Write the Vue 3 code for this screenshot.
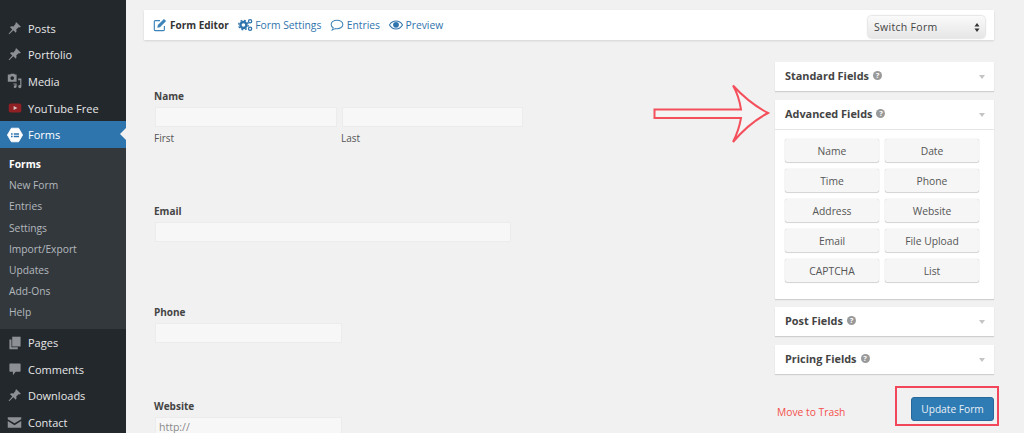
<script setup>
const pin = 'M12.5 1.5l6 6-1.6 1-1-.6-3.6 3.4c.7 1.6.4 3.2-.6 4.3l-3.2-3.2-5.5 5.1-.9-.4 4.9-5.9-3.1-3.1c1.2-1 2.8-1.2 4.3-.6l3.4-3.7-.5-1z'
const topItems = [
  { label: 'Posts', icon: 'pin' },
  { label: 'Portfolio', icon: 'pin' },
  { label: 'Media', icon: 'media' },
  { label: 'YouTube Free', icon: 'yt' }
]
const subItems = ['New Form', 'Entries', 'Settings', 'Import/Export', 'Updates', 'Add-Ons', 'Help']
const bottomItems = [
  { label: 'Pages', icon: 'pages' },
  { label: 'Comments', icon: 'comment' },
  { label: 'Downloads', icon: 'pin' },
  { label: 'Contact', icon: 'mail' }
]
const advanced = ['Name', 'Date', 'Time', 'Phone', 'Address', 'Website', 'Email', 'File Upload', 'CAPTCHA', 'List']
</script>

<template>
  <div class="page">
    <aside class="side">
      <ul class="menu">
        <li v-for="m in topItems" :key="m.label" class="item">
          <span class="ic">
            <svg v-if="m.icon === 'pin'" viewBox="0 0 20 20" width="15" height="15"><path :d="pin" fill="#8d9094"/></svg>
            <svg v-else-if="m.icon === 'media'" viewBox="0 0 20 20" width="16" height="16"><path d="M1 2h3l1-1h4l1 1h2v9H1zM6.5 4a2.3 2.3 0 100 4.600a2.300 2.300 0 000-4.600z" fill="#8d9094" fill-rule="evenodd"/><path d="M14 7h4v10a2 2 0 11-1.500-1.900V9h-2.500zM8 13h4v4a1.800 1.800 0 11-1.400-1.700V14.500H8z" fill="#8d9094"/></svg>
            <svg v-else viewBox="0 0 20 20" width="14" height="14"><rect x="1" y="3.500" width="18" height="13" rx="2.500" fill="#8f2024"/><path d="M8 7.200l5.500 2.800L8 12.800z" fill="#d8c4c4"/></svg>
          </span>{{ m.label }}
        </li>
        <li class="item current">
          <span class="ic">
            <svg viewBox="0 0 20 20" width="16" height="16"><path d="M5.500 1.500h9l5 8.500-5 8.500h-9L.5 10z" fill="#fff" stroke="#fff" stroke-linejoin="round"/><path d="M5 7.800h2v1.800H5zM8.500 7.800H15v1.800H8.500zM5 11h2v1.800H5zM8.500 11H15v1.800H8.500z" fill="#2e75ae"/></svg>
          </span>Forms
          <span class="notch"></span>
        </li>
        <li class="sub">
          <div class="sub-link strong">Forms</div>
          <div v-for="s in subItems" :key="s" class="sub-link">{{ s }}</div>
        </li>
        <li v-for="m in bottomItems" :key="m.label" class="item">
          <span class="ic">
            <svg v-if="m.icon === 'pin'" viewBox="0 0 20 20" width="15" height="15"><path :d="pin" fill="#8d9094"/></svg>
            <svg v-else-if="m.icon === 'pages'" viewBox="0 0 20 20" width="14" height="14"><path d="M6 1h12v14H6z" fill="#8d9094"/><path d="M2 5h3v11h9v3H2z" fill="#8d9094"/></svg>
            <svg v-else-if="m.icon === 'comment'" viewBox="0 0 20 20" width="14" height="14"><path d="M3 2h14a1 1 0 011 1v10a1 1 0 01-1 1h-6l-4 5v-5H3a1 1 0 01-1-1V3a1 1 0 011-1z" fill="#8d9094"/></svg>
            <svg v-else viewBox="0 0 20 20" width="15" height="15"><path d="M1 3h18v2.500l-9 5.500-9-5.500zM1 8l9 5.500L19 8v9H1z" fill="#8d9094"/></svg>
          </span>{{ m.label }}
        </li>
      </ul>
    </aside>

    <main class="main">
      <nav class="toolbar">
        <span class="tab active">
          <svg viewBox="0 0 16 16" width="14" height="14"><path d="M13 9v4.500a1 1 0 01-1 1H2.500a1 1 0 01-1-1V4a1 1 0 011-1H8" fill="none" stroke="#3f84b9" stroke-width="1.300"/><path d="M5.500 8l7-7 2.500 2.500-7 7L5 11z" fill="#3f84b9"/></svg>
          Form Editor
        </span>
        <span class="tab">
          <svg viewBox="0 0 18 16" width="15" height="14"><circle cx="6.500" cy="8" r="3.600" fill="none" stroke="#2f74ad" stroke-width="2.800"/><circle cx="6.500" cy="8" r="5.700" fill="none" stroke="#2f74ad" stroke-width="1.600" stroke-dasharray="2.200 2.300"/><circle cx="14.500" cy="3.500" r="1.900" fill="none" stroke="#2f74ad" stroke-width="1.600"/><circle cx="14.500" cy="12.500" r="1.900" fill="none" stroke="#2f74ad" stroke-width="1.600"/></svg>
          Form Settings
        </span>
        <span class="tab">
          <svg viewBox="0 0 16 16" width="14" height="14"><path d="M8 2.500c3.700 0 6.700 2.200 6.700 4.900S11.700 12.300 8 12.300c-.8 0-1.500-.1-2.100-.3-.9.9-2 1.500-3.400 1.700.7-.8 1.100-1.600 1.200-2.500C2.200 10.300 1.300 9 1.300 7.400c0-2.700 3-4.900 6.700-4.900z" fill="none" stroke="#3f84b9" stroke-width="1.200"/></svg>
          Entries
        </span>
        <span class="tab">
          <svg viewBox="0 0 16 16" width="14" height="14"><path d="M.5 8C2.300 5 5 3.500 8 3.500S13.700 5 15.500 8c-1.800 3-4.500 4.500-7.500 4.500S2.300 11 .5 8z" fill="none" stroke="#2f74ad" stroke-width="1.200"/><circle cx="8" cy="7.800" r="3.300" fill="#2f74ad"/></svg>
          Preview
        </span>
        <span class="switch">Switch Form
          <svg viewBox="0 0 6 11" width="6" height="11"><path d="M3 1l2.500 3.500h-5zM3 10L.5 6.500h5z" fill="#333"/></svg>
        </span>
      </nav>

      <div class="body">
        <form class="form" @submit.prevent>
          <section class="field f-name">
            <label class="lbl">Name</label>
            <div class="pair">
              <div><div class="inp w-first"></div><div class="cap">First</div></div>
              <div><div class="inp w-last"></div><div class="cap">Last</div></div>
            </div>
          </section>
          <section class="field f-email">
            <label class="lbl">Email</label>
            <div class="inp w-email"></div>
          </section>
          <section class="field f-phone">
            <label class="lbl">Phone</label>
            <div class="inp w-phone"></div>
          </section>
          <section class="field f-web">
            <label class="lbl">Website</label>
            <div class="inp w-phone ph">http://</div>
          </section>
        </form>

        <div class="panels">
          <div class="panel"><div class="head"><b>Standard Fields</b><i class="q">?</i><span class="caret"></span></div></div>
          <div class="panel adv">
            <div class="head line"><b>Advanced Fields</b><i class="q">?</i><span class="caret"></span></div>
            <div class="btns">
              <span v-for="b in advanced" :key="b" class="btn">{{ b }}</span>
            </div>
          </div>
          <div class="panel"><div class="head"><b>Post Fields</b><i class="q">?</i><span class="caret"></span></div></div>
          <div class="panel"><div class="head"><b>Pricing Fields</b><i class="q">?</i><span class="caret"></span></div></div>
          <div class="actions">
            <a class="trash">Move to Trash</a>
            <span class="update">Update Form</span>
            <span class="redbox"></span>
          </div>
        </div>
      </div>

      <svg class="arrow" viewBox="0 0 120 66" width="120" height="66">
        <path d="M1.500 26.500H88Q86 13 80 2.500Q96 20 115 30Q96 40 80 59Q86 47 88 35H1.500z" fill="#f4f4f4" stroke="#f4505c" stroke-width="2"/>
      </svg>
    </main>
  </div>
</template>

<style>
html, body { margin: 0; background: #f1f1f1; }
</style>

<style scoped>
.page {
  display: flex;
  width: 1024px;
  height: 433px;
  overflow: hidden;
  background: #f1f1f1;
  font-family: "Open Sans", "Liberation Sans", sans-serif;
  font-size: 11px;
  color: #444;
}
.side {
  flex: 0 0 126px;
  background: #23282d;
  color: #e6e7e8;
}
.menu {
  list-style: none;
  margin: 0;
  padding: 15px 0 0;
}
.item {
  position: relative;
  display: flex;
  align-items: center;
  height: 26.600px;
  font-size: 11px;
}
.ic {
  flex: 0 0 28px;
  display: flex;
  justify-content: center;
  padding-left: 1px;
  box-sizing: border-box;
}
.current {
  background: #2e75ae;
  color: #fff;
}
.notch {
  position: absolute;
  right: 0;
  top: 7px;
  border: 6px solid transparent;
  border-right-color: #f1f1f1;
  border-left-width: 0;
}
.sub {
  background: #33383d;
  padding: 6px 0 6px;
  color: #b4b9be;
}
.sub-link {
  height: 21.200px;
  line-height: 21.200px;
  padding-left: 9px;
  font-size: 10.250px;
}
.strong { color: #fff; font-weight: 700; }
.main {
  position: relative;
  flex: 1;
  padding: 10px 30px 0 18px;
  box-sizing: border-box;
}
.toolbar {
  display: flex;
  align-items: center;
  height: 30px;
  padding: 0 9px 0 9px;
  background: #fff;
  box-shadow: 0 1px 2px rgba(0,0,0,.12);
  color: #2f74ad;
  font-size: 10.300px;
  gap: 9px;
}
.tab { display: flex; align-items: center; gap: 2.500px; }
.active { color: #333; font-weight: 700; font-size: 10px; gap: 3px; }
.switch {
  margin-left: auto;
  margin-top: 4px;
  width: 117px;
  height: 22px;
  box-sizing: border-box;
  display: flex;
  align-items: center;
  justify-content: space-between;
  padding: 0 5px 0 6px;
  border-radius: 4px;
  background: linear-gradient(#fafafa, #e6e6e6);
  box-shadow: 0 0 2px rgba(0,0,0,.35);
  font-size: 10.500px;
  letter-spacing: .3px;
  color: #444;
}
.body { display: flex; justify-content: space-between; }
.form { padding: 0 0 0 10px; }
.field { display: block; }
.lbl {
  display: block;
  font-weight: 700;
  font-size: 10px;
  line-height: 14px;
  color: #444;
  margin-bottom: 4px;
}
.f-name { padding-top: 49px; }
.f-email { padding-top: 59px; }
.f-phone { padding-top: 63px; }
.f-web { padding-top: 56px; }
.pair { display: flex; gap: 5px; }
.inp {
  height: 20px;
  box-sizing: border-box;
  margin-left: 1px;
  background: #f7f7f7;
  border: 1px solid #ececec;
  font-size: 10.500px;
  line-height: 18px;
}
.w-first { width: 182px; }
.w-last { width: 181px; margin-left: 0; }
.w-email { width: 356px; }
.w-phone { width: 187px; }
.ph { color: #888; padding-left: 3px; height: 16px; border-bottom: 0; }
.cap {
  margin-top: 4px;
  font-size: 10px;
  line-height: 14px;
  color: #555;
}
.pair > div + div .cap { margin-left: -1px; }
.panels { width: 219px; padding-top: 22px; margin-right: 0; }
.panel {
  background: #fff;
  box-shadow: 0 1px 1px rgba(0,0,0,.14);
  margin-bottom: 9px;
}
.adv { margin-bottom: 8px; }
.head {
  position: relative;
  display: flex;
  align-items: center;
  height: 29px;
  box-sizing: border-box;
  padding: 0 0 2px 10px;
  font-size: 10.900px;
  color: #444;
}
.line { height: 30px; border-bottom: 1px solid #e6e6e6; }
.head b { font-weight: 700; }
.q {
  width: 9px;
  height: 9px;
  margin-left: 4px;
  border-radius: 50%;
  background: #999;
  color: #fff;
  font: 700 7.500px/9px "Open Sans", sans-serif;
  text-align: center;
}
.caret {
  position: absolute;
  right: 9px;
  top: 13px;
  border: 3.500px solid transparent;
  border-top: 4px solid #c4c4c4;
  border-bottom: 0;
}
.btns {
  display: grid;
  grid-template-columns: 94px 94px;
  column-gap: 6px;
  row-gap: 7px;
  padding: 9px 15px 17px 10px;
}
.btn {
  height: 23px;
  line-height: 24px;
  text-align: center;
  background: #f6f6f6;
  border-radius: 2px;
  box-shadow: 0 0 1px rgba(0,0,0,.3), 0 1px 1px rgba(0,0,0,.15);
  font-size: 10.300px;
  color: #555;
}
.actions {
  position: relative;
  display: flex;
  align-items: center;
  justify-content: space-between;
  padding: 14px 0 0 2px;
}
.trash { color: #f4504c; font-size: 10.300px; margin-top: 6px; }
.update {
  width: 83px;
  height: 24px;
  line-height: 23px;
  text-align: center;
  background: #2f7bb3;
  border: 1px solid #27699b;
  box-sizing: border-box;
  border-radius: 3px;
  color: #e9f1f7;
  font-size: 10.200px;
}
.redbox {
  position: absolute;
  left: 120px;
  top: 3px;
  width: 104px;
  height: 40px;
  box-sizing: border-box;
  border: 2px solid #f2475a;
}
.arrow {
  position: absolute;
  left: 527px;
  top: 83px;
}
</style>
